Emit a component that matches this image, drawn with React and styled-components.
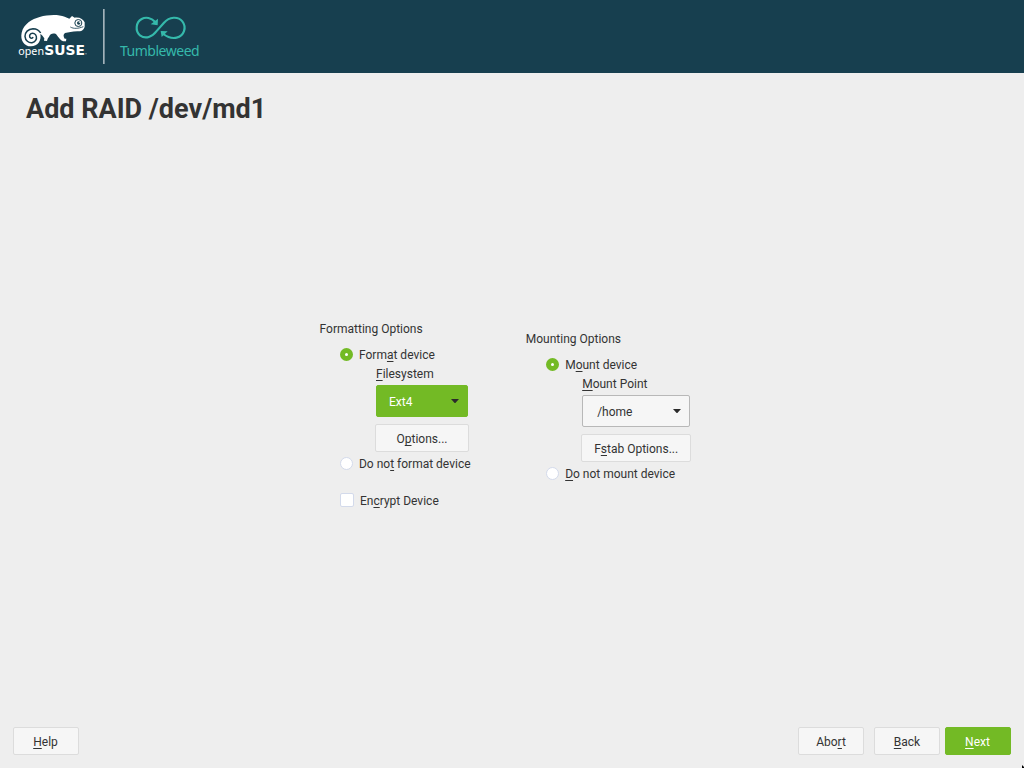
import React from 'react';
import styled, { createGlobalStyle, css } from 'styled-components';

const GlobalStyle = createGlobalStyle`
  * { box-sizing: border-box; }
  body { margin: 0; background: #eeeeee; overflow: hidden; }
`;

const Screen = styled.div`
  position: relative;
  display: flex;
  flex-direction: column;
  width: 1024px;
  height: 768px;
  background: #eeeeee;
  color: #333333;
  font: 12px/14px Roboto, "Liberation Sans", sans-serif;
`;

const Banner = styled.header`
  display: flex;
  height: 73px;
  background: #173f4f;
`;

const Title = styled.h1`
  margin: 20px 0 0 26px;
  font-size: 27px;
  line-height: 32px;
  font-weight: 700;
`;

const Content = styled.main`
  flex: 1;
  display: flex;
  align-items: flex-start;
  padding: 197px 0 0 319.6px;
`;

const Group = styled.section`
  display: flex;
  flex-direction: column;
  align-items: flex-start;
  width: 206.2px;
  padding-top: ${(p) => p.$top}px;
`;

const GroupTitle = styled.div`
  height: 14px;
  margin-bottom: 12px;
`;

const Choice = styled.div`
  display: flex;
  align-items: flex-start;
  height: 14px;
  margin: ${(p) => p.$gap || 0}px 0 0 20.4px;
  gap: 6px;
  white-space: nowrap;
`;

const Radio = styled.span`
  flex: none;
  width: 13px;
  height: 13px;
  border-radius: 50%;
  background: #ffffff;
  border: 1px solid #d3daeb;
  ${(p) =>
    p.$on &&
    css`
      border: 5px solid #73ba25;
    `}
`;

const Checkbox = styled.span`
  flex: none;
  width: 14px;
  height: 14px;
  margin-top: -1px;
  border-radius: 2px;
  background: #ffffff;
  border: 1px solid #d3daeb;
`;

const FieldLabel = styled.div`
  margin: 5px 0 4px 56.4px;
  height: 14px;
`;

const Combo = styled.div`
  display: flex;
  align-items: center;
  justify-content: space-between;
  width: ${(p) => p.$width}px;
  height: 32px;
  margin-left: 56.4px;
  padding: 1px 8px 0 ${(p) => p.$inset}px;
  border: 1px solid ${(p) => (p.$active ? '#73ba25' : '#b8b8b8')};
  border-radius: 2px;
  background: ${(p) => (p.$active ? '#73ba25' : '#f6f6f6')};
  color: ${(p) => (p.$active ? '#ffffff' : '#333333')};

  svg { margin-bottom: 2px; }
`;

const Button = styled.div`
  display: flex;
  align-items: center;
  justify-content: center;
  width: ${(p) => p.$width || 66}px;
  height: 28px;
  padding: 1px ${(p) => p.$nudge || 0}px 0 0;
  border: 1px solid ${(p) => (p.$primary ? '#73ba25' : '#dcdcdc')};
  border-radius: 2px;
  background: ${(p) => (p.$primary ? '#73ba25' : '#f6f6f6')};
  color: ${(p) => (p.$primary ? '#ffffff' : '#333333')};
`;

const Indent = styled.div`
  margin: 7px 0 0 55.4px;
`;

const Footer = styled.footer`
  display: flex;
  padding: 0 13px 13px;
`;

const Actions = styled.div`
  display: flex;
  margin-left: auto;
  & > :nth-child(2) { margin-left: 10px; }
  & > :nth-child(3) { margin-left: 5px; }
`;

const Key = styled.span`
  text-decoration: underline;
  text-decoration-thickness: 1px;
  text-underline-offset: 2px;
  text-decoration-skip-ink: none;
`;

const Pointer = styled.svg`
  position: absolute;
  right: 0;
  bottom: 0;
`;

// "&" marks the accelerator letter that follows it.
function Label({ text }) {
  const i = text.indexOf('&');
  return (
    <span>
      {text.slice(0, i)}
      <Key>{text[i + 1]}</Key>
      {text.slice(i + 2)}
    </span>
  );
}

const Arrow = () => (
  <svg width="8" height="4" viewBox="0 0 8 4">
    <path d="M0 0h8L4.6 3.7q-.6.5-1.2 0z" fill="#2b2b2b" />
  </svg>
);

const Logo = () => (
  <svg width="210" height="73" viewBox="0 0 630 219">
    <path
      fill="#fff"
      d="M65 98C71 72 96 57 119 51C144 44 174 43 194 50L208 56L216 48L224 53C240 51 250 58 254 67L254 80C251 91 244 94 232 94C216 95 206 97 195 99C189 103 190 110 194 116L199 116L198 124L189 124C181 121 176 112 168 102C157 99 151 102 148 109L143 116L141 123L132 122L133 115C129 109 126 105 121 102C125 122 113 139 93 139C72 139 60 120 65 98Z"
    />
    <path
      fill="none"
      stroke="#173f4f"
      strokeWidth="4.5"
      d="M122 99C117 90 109 86 99 86C84 87 75 97 75 109C76 122 86 129 96 128C106 126 111 118 109 109C107 101 99 98 93 101C88 104 87 111 92 114C95 116 98 114 99 111"
    />
    <path d="M211 81C221 87 235 86 250 80" fill="none" stroke="#173f4f" strokeWidth="2.5" />
    <circle cx="235" cy="69" r="10.5" fill="#fff" stroke="#173f4f" strokeWidth="3" />
    <circle cx="236" cy="69" r="5" fill="#173f4f" />
    <circle cx="238" cy="67" r="1.8" fill="#fff" />
    <g fill="#fff">
      <text x="55" y="164" fontSize="35" textLength="77" lengthAdjust="spacingAndGlyphs" fontFamily="'Noto Sans', sans-serif">open</text>
      <text x="133" y="164" fontSize="40" fontWeight="700" textLength="122" lengthAdjust="spacingAndGlyphs" fontFamily="'DejaVu Sans', sans-serif">SUSE</text>
    </g>
    <circle cx="258" cy="161" r="1.5" fill="#fff" />
    <rect x="309" y="27" width="5" height="165" fill="#a2b2b9" />
    <g fill="none" stroke="#35b9ab" strokeWidth="6.5">
      <path d="M465 65C454 53 437 50 425 57C407 67 405 93 420 106C437 119 457 110 469 94L492 68C508 50 534 48 547 64C561 82 552 108 530 113C516 116 503 112 490 102" />
    </g>
    <path d="M474 56L473 76L452 73ZM482 93L503 94L485 111Z" fill="#35b9ab" />
    <text x="360" y="167" fill="#35b9ab" fontSize="42" textLength="239" lengthAdjust="spacing" fontFamily="'Noto Sans', sans-serif">Tumbleweed</text>
  </svg>
);

export default function App() {
  return (
    <Screen>
      <GlobalStyle />
      <Banner>
        <Logo />
      </Banner>
      <Title>Add RAID /dev/md1</Title>
      <Content>
        <Group $top={0}>
          <GroupTitle>Formatting Options</GroupTitle>
          <Choice>
            <Radio $on />
            <Label text="Form&at device" />
          </Choice>
          <FieldLabel><Label text="&Filesystem" /></FieldLabel>
          <Combo $width={92} $inset={12} $active>
            <span>Ext4</span>
            <Arrow />
          </Combo>
          <Indent><Button $width={94}><Label text="O&ptions..." /></Button></Indent>
          <Choice $gap={5}>
            <Radio />
            <Label text="Do no&t format device" />
          </Choice>
          <Choice $gap={23}>
            <Checkbox />
            <Label text="En&crypt Device" />
          </Choice>
        </Group>
        <Group $top={10}>
          <GroupTitle>Mounting Options</GroupTitle>
          <Choice>
            <Radio $on />
            <Label text="M&ount device" />
          </Choice>
          <FieldLabel><Label text="&Mount Point" /></FieldLabel>
          <Combo $width={108} $inset={14}>
            <span>/home</span>
            <Arrow />
          </Combo>
          <Indent><Button $width={110}><Label text="F&stab Options..." /></Button></Indent>
          <Choice $gap={5}>
            <Radio />
            <Label text="&Do not mount device" />
          </Choice>
        </Group>
      </Content>
      <Footer>
        <Button $nudge={1}><Label text="&Help" /></Button>
        <Actions>
          <Button><Label text="Abo&rt" /></Button>
          <Button><Label text="&Back" /></Button>
          <Button $primary $nudge={1}><Label text="&Next" /></Button>
        </Actions>
      </Footer>
      <Pointer width="2" height="3" viewBox="0 0 2 3">
        <path d="M0 0L2 2V3H0Z" fill="#000" />
      </Pointer>
    </Screen>
  );
}
